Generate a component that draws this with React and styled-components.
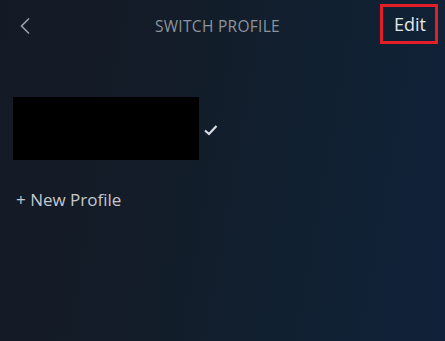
import styled, { createGlobalStyle } from 'styled-components';

const GlobalStyle = createGlobalStyle`
  html, body {
    margin: 0;
    padding: 0;
    background: #131b26;
  }
  * { box-sizing: border-box; }
`;

const Screen = styled.div`
  width: 445px;
  height: 341px;
  overflow: hidden;
  background: linear-gradient(100deg, #141a25 0%, #131c28 35%, #112030 65%, #10223a 100%);
  font-family: 'Open Sans', Lato, sans-serif;
`;

const Header = styled.div`
  display: grid;
  grid-template-columns: 60px 1fr 60px;
  align-items: center;
  height: 46px;
  padding: 4px 7px 0 19px;
`;

const BackButton = styled.div`
  display: flex;
  align-items: center;
  padding-top: 1px;
`;

const Title = styled.div`
  text-align: center;
  font-size: 15.5px;
  letter-spacing: 0.3px;
  color: #8d949d;
  padding-top: 2px;
  padding-right: 22px;
`;

const EditBox = styled.div`
  justify-self: end;
  width: 58px;
  height: 40px;
  border: 3px solid #e41e28;
  display: flex;
  align-items: center;
  justify-content: center;
  padding-left: 2px;
  font-size: 18px;
  font-weight: 500;
  color: #e4e7ea;
  margin-top: -2px;
`;

const Body = styled.div`
  padding: 51px 0 0 13px;
`;

const ProfileRow = styled.div`
  display: flex;
  align-items: center;
  gap: 4px;
`;

const Avatar = styled.div`
  width: 186px;
  height: 63px;
  background: #000;
`;

const NewProfile = styled.div`
  margin-top: 28px;
  padding-left: 3px;
  font-size: 17px;
  color: #c4c8cd;
`;

export default function App() {
  return (
    <>
      <GlobalStyle />
      <Screen>
        <Header>
          <BackButton>
            <svg width="14" height="18" viewBox="0 0 14 18">
              <path d="M10 1.5 L2.5 9 L10 16.5" fill="none" stroke="#9aa1aa" strokeWidth="1.6" />
            </svg>
          </BackButton>
          <Title>SWITCH PROFILE</Title>
          <EditBox>Edit</EditBox>
        </Header>
        <Body>
          <ProfileRow>
            <Avatar />
            <svg width="16" height="12" viewBox="0 0 16 12" style={{ marginTop: 2 }}>
              <path d="M2 6.5 L6 10 L13.5 2" fill="none" stroke="#d8dce0" strokeWidth="2.2" />
            </svg>
          </ProfileRow>
          <NewProfile>+ New Profile</NewProfile>
        </Body>
      </Screen>
    </>
  );
}
